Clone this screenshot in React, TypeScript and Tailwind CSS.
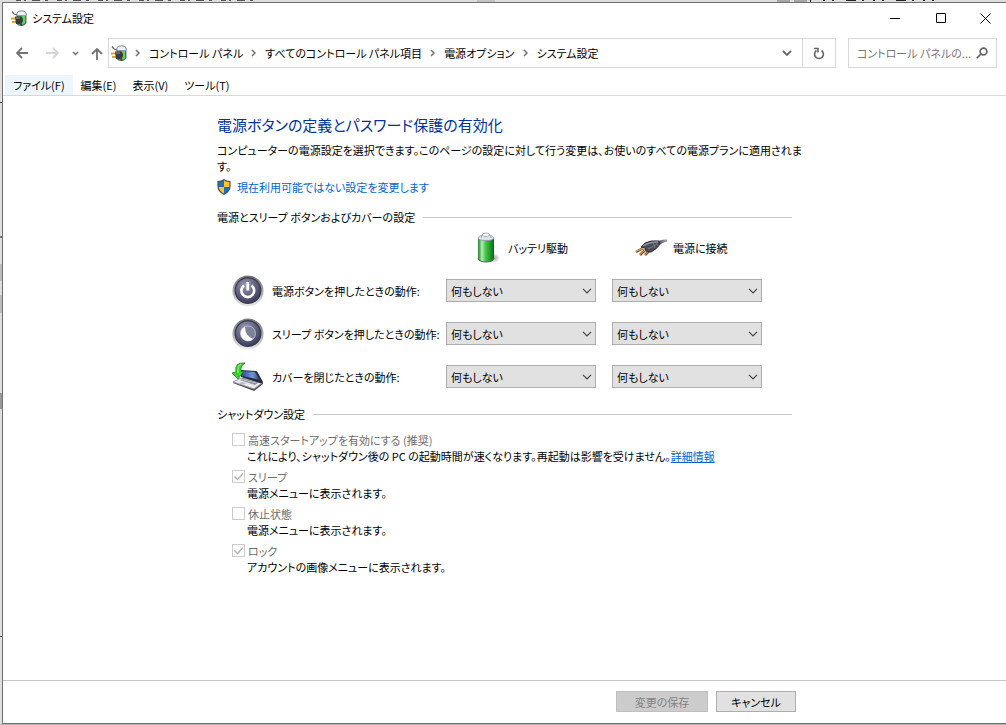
import { useState } from 'react';

const ACTIONS = ['何もしない', 'スリープ状態', '休止状態', 'シャットダウン'];

const BREADCRUMBS = ['コントロール パネル', 'すべてのコントロール パネル項目', '電源オプション', 'システム設定'];

const MENUS = ['ファイル(F)', '編集(E)', '表示(V)', 'ツール(T)'];

const SHUTDOWN_OPTIONS = [
  {
    id: 'fast-startup',
    label: '高速スタートアップを有効にする (推奨)',
    description: 'これにより、シャットダウン後の PC の起動時間が速くなります。再起動は影響を受けません。',
    link: '詳細情報',
    checked: false,
  },
  { id: 'sleep', label: 'スリープ', description: '電源メニューに表示されます。', checked: true },
  { id: 'hibernate', label: '休止状態', description: '電源メニューに表示されます。', checked: false },
  { id: 'lock', label: 'ロック', description: 'アカウントの画像メニューに表示されます。', checked: true },
];

function PowerOptionsIcon() {
  return (
    <svg width="16" height="17" viewBox="0 0 16 17" className="shrink-0">
      <path d="M6 3 Q6 1 10.5 1 Q15 1 15 3 V13 Q14 15.500 10.500 15.500 Q6 15.500 6 13Z" fill="#2f9e3c" stroke="#4a6b50" strokeWidth=".8" />
      <path d="M11 5h3v8l-3 2z" fill="#63cf68" />
      <path d="M6 3.500Q6 1 10.500 1T15 3.500V5.500H6z" fill="#eef1f6" stroke="#8a93a3" strokeWidth=".8" />
      <path d="M1 1.500 3 4l3 1" fill="none" stroke="#666" strokeWidth="1.300" />
      <path d="M0 8.500h5M1 12h5" stroke="#d9a92b" strokeWidth="1.800" />
      <path d="M4 6.500h4.500q3.500 0 3.500 3.500t-3.500 4H5z" fill="#3a3a3a" />
      <path d="M5 8h4" stroke="#999" />
      <path d="M9 13q1.500 1 2 3" fill="none" stroke="#444" strokeWidth="1.800" />
    </svg>
  );
}

function ShieldIcon() {
  return (
    <svg width="14" height="16" viewBox="0 0 14 16" className="shrink-0">
      <path d="M7 .7Q4.500 2.500 1 2.500V7q0 5.500 6 8.300Q13 12.500 13 7V2.500Q9.500 2.500 7 .7Z" fill="#1b6fc4" />
      <path d="M7 .7Q9.500 2.500 13 2.500V8H7ZM1 8h6v7.300Q1.600 13 1 8Z" fill="#ffc32b" />
      <path d="M7 .7Q4.500 2.500 1 2.500V7q0 5.500 6 8.300Q13 12.500 13 7V2.500Q9.500 2.500 7 .7Z" fill="none" stroke="#45525c" strokeWidth="1.200" />
    </svg>
  );
}

function BatteryIcon() {
  return (
    <svg width="24" height="32" viewBox="0 0 24 32" className="shrink-0">
      <defs>
        <linearGradient id="battery-body">
          <stop offset="0" stopColor="#1c8327" />
          <stop offset=".25" stopColor="#b4edb0" />
          <stop offset=".45" stopColor="#4fc653" />
          <stop offset=".7" stopColor="#25a52e" />
          <stop offset="1" stopColor="#0b6517" />
        </linearGradient>
        <radialGradient id="battery-shadow">
          <stop offset="0" stopColor="#888" stopOpacity=".8" />
          <stop offset="1" stopColor="#888" stopOpacity="0" />
        </radialGradient>
      </defs>
      <ellipse cx="18" cy="26" rx="6" ry="5" fill="url(#battery-shadow)" />
      <path d="M2 6v21q1 3 8 3t8-3V6z" fill="url(#battery-body)" />
      <path d="M2 26q1 4 8 4t8-4" fill="none" stroke="#4b6b4e" />
      <path d="M2 6Q3 4 6 3q1-2 4-2t4 2q3 1 4 3-1 2.500-8 2.500T2 6Z" fill="#dfe5ee" stroke="#8b98a4" strokeWidth=".8" />
      <path d="M6 3.500q4 2.500 8 0M6 3l-1 3M14 3l1 3" fill="none" stroke="#9aa5b8" strokeWidth=".8" />
      <ellipse cx="10" cy="2.800" rx="3" ry="1" fill="#fff" />
    </svg>
  );
}

function PlugIcon() {
  return (
    <svg width="32" height="20" viewBox="0 0 32 20" className="shrink-0">
      <defs>
        <linearGradient id="plug-cord">
          <stop offset="0" stopColor="#2c2d38" />
          <stop offset="1" stopColor="#a9abba" />
        </linearGradient>
      </defs>
      <path d="M20 5Q25 1 32 1.500V4q-5 0-9 5z" fill="url(#plug-cord)" />
      <path d="M8 10 1 14M10 12 5 17M14 13l-4 4" stroke="#754419" strokeWidth="2.500" />
      <path d="M8 10 1 13.500M10 12 5 16.500M14 13l-4 3.500" stroke="#ebbb83" />
      <path d="M6 9 10 5Q16 2 24 3l1 3q-3 5-9 8-4 0-5-1l-1-3z" fill="#4b4d59" stroke="#292a34" />
      <path d="M8 8q6-4 15-4" fill="none" stroke="#9194a3" strokeWidth="1.500" />
      <path d="m13 11 8-4M18 4l2 6M21 3l2 5" stroke="#747786" />
    </svg>
  );
}

function RoundButtonIcon({ kind }: { kind: 'power' | 'sleep' }) {
  return (
    <svg width="32" height="32" viewBox="0 0 32 32" className="shrink-0">
      <defs>
        <linearGradient id={`ring-${kind}`} x1="0" y1="0" x2="0" y2="1">
          <stop offset="0" stopColor="#777" />
          <stop offset=".6" stopColor="#b0b0b0" />
          <stop offset="1" stopColor="#ececec" />
        </linearGradient>
        <radialGradient id={`face-${kind}`} cx=".4" cy=".3" r=".8">
          <stop offset="0" stopColor="#9b9db5" />
          <stop offset=".5" stopColor="#61627f" />
          <stop offset="1" stopColor="#30304b" />
        </radialGradient>
      </defs>
      <circle cx="16" cy="16" r="15.500" fill={`url(#ring-${kind})`} />
      <circle cx="16" cy="15.500" r="12.800" fill={`url(#face-${kind})`} stroke="#37374f" strokeWidth="1.200" />
      {kind === 'power' ? (
        <>
          <path d="M12 10.500a6.400 6.400 0 1 0 7.500 0" fill="none" stroke="#fff" strokeWidth="2.600" />
          <path d="M15.800 7v8.500" stroke="#fff" strokeWidth="2.800" />
        </>
      ) : (
        <>
          <circle cx="16" cy="15.500" r="7.500" fill="#7f8099" stroke="#c7c8d6" strokeWidth=".8" />
          <path d="M13 8.500a7.500 7.500 0 1 0 8 12.500Q13 18 13 8.500Z" fill="#fff" />
        </>
      )}
    </svg>
  );
}

function LidIcon() {
  return (
    <svg width="32" height="30" viewBox="0 0 32 30" className="shrink-0">
      <defs>
        <linearGradient id="lid-screen">
          <stop offset="0" stopColor="#2e4da5" />
          <stop offset=".6" stopColor="#7295d6" />
          <stop offset="1" stopColor="#243363" />
        </linearGradient>
      </defs>
      <path d="m1 21 21 8 9-7v-2l-10 4-19-5z" fill="#4b4c55" />
      <path d="m1 20 8-4 21 5-8 6z" fill="#e6e8ec" stroke="#888c94" strokeWidth=".8" />
      <path d="m8 18 3-2 16 4-4 3z" fill="#8b8e98" />
      <path d="m9 17 15 4M12 19l4-2M16 20l4-2M20 21l4-2" stroke="#d0d3da" strokeWidth=".6" />
      <path d="m9 20 5 1-2 1.500-5-1z" fill="#b9bcc4" />
      <path d="m9 8 15 1q1 0 2 2l5 9q-1 2-3 1L9 15z" fill="#252a3a" />
      <path d="m11 9 12 1 5 8-18-4z" fill="url(#lid-screen)" />
      <path d="M13 1Q2 0 4 10L0 11l6 6 6-8-3 .5Q8 4 13 1Z" fill="#3bd12e" stroke="#168414" strokeWidth=".8" />
      <path d="M9 2Q5 4 6 11" fill="none" stroke="#aaf39c" />
    </svg>
  );
}

const POWER_ACTIONS = [
  { id: 'power', label: '電源ボタンを押したときの動作:', icon: <RoundButtonIcon kind="power" /> },
  { id: 'sleep', label: 'スリープ ボタンを押したときの動作:', icon: <RoundButtonIcon kind="sleep" /> },
  { id: 'lid', label: 'カバーを閉じたときの動作:', icon: <LidIcon /> },
];

function ActionSelect({ label }: { label: string }) {
  const [value, setValue] = useState(ACTIONS[0]);

  return (
    <div className="relative">
      <select
        aria-label={label}
        value={value}
        onChange={(e) => setValue(e.target.value)}
        className="block h-[23px] w-full appearance-none border border-[#adadad] bg-[#e1e1e1] pr-5 pl-1 text-[11px] leading-4"
      >
        {ACTIONS.map((action) => (
          <option key={action}>{action}</option>
        ))}
      </select>
      <svg
        width="10"
        height="6"
        fill="none"
        stroke="#444"
        className="pointer-events-none absolute top-[9px] right-1"
      >
        <path d="m1 .8 4 4 4-4" strokeWidth="1.200" />
      </svg>
    </div>
  );
}

function SectionTitle({ children }: { children: string }) {
  return (
    <div className="flex items-center gap-2">
      <h2>{children}</h2>
      <div className="h-px flex-1 bg-[#c8c8c8]" />
    </div>
  );
}

function TitleBar() {
  return (
    <div className="flex h-[30px] items-center pl-2">
      <PowerOptionsIcon />
      <span className="ml-[5px] flex-1">システム設定</span>
      <button aria-label="最小化" className="flex h-full w-[46px] items-center justify-center">
        <svg width="10" height="10" stroke="#000"><path d="M0 5.500h10" /></svg>
      </button>
      <button aria-label="最大化" className="flex h-full w-[46px] items-center justify-center">
        <svg width="10" height="10" fill="none" stroke="#000"><path d="M.5.5h9v9h-9z" /></svg>
      </button>
      <button aria-label="閉じる" className="flex h-full w-[42px] items-center justify-center">
        <svg width="11" height="11" stroke="#000"><path d="m.5.5 10 10M10.500.5l-10 10" /></svg>
      </button>
    </div>
  );
}

function AddressBar() {
  return (
    <div className="mt-[5px] flex h-[30px] items-center pr-[9px] pl-[13px]">
      <button aria-label="戻る" className="text-[#737373]">
        <svg width="14" height="12" fill="none" stroke="currentColor" strokeWidth="1.800"><path d="M12 6H1M6 1 1 6l5 5" /></svg>
      </button>
      <button aria-label="進む" className="ml-4 text-[#d6d6d6]">
        <svg width="14" height="12" fill="none" stroke="currentColor" strokeWidth="1.800"><path d="M0 6h11M7 1l5 5-5 5" /></svg>
      </button>
      <button aria-label="最近表示した場所" className="ml-3 text-[#737373]">
        <svg width="7" height="5" fill="none" stroke="currentColor" strokeWidth="1.500"><path d="m1 1 2.500 2.500L6 1" /></svg>
      </button>
      <button aria-label="上へ" className="ml-3 text-[#737373]">
        <svg width="12" height="13" fill="none" stroke="currentColor" strokeWidth="1.800"><path d="M6 13V2M1 7l5-5 5 5" /></svg>
      </button>
      <nav className="ml-[5px] flex h-full flex-1 items-center border border-[#d9d9d9] pl-[2px]">
        <PowerOptionsIcon />
        {BREADCRUMBS.map((crumb) => (
          <span key={crumb} className="flex items-center">
            <svg width="6" height="8" className="mx-2" fill="none" stroke="#737373" strokeWidth="1.500"><path d="m1 1 3 3-3 3" /></svg>
            <a href="#" className="whitespace-nowrap">{crumb}</a>
          </span>
        ))}
        <button aria-label="以前の場所" className="mr-[6px] ml-auto p-1 text-[#666]">
          <svg width="10" height="6" fill="none" stroke="currentColor" strokeWidth="1.800"><path d="m1 1 4 4 4-4" /></svg>
        </button>
        <button aria-label="最新の情報に更新" className="flex h-full w-[33px] items-center justify-center border-l border-[#d9d9d9]">
          <svg width="12" height="13" viewBox="0 0 12 13" fill="none" stroke="#666" strokeWidth="1.600">
            <path d="M8.500 3.500A4.400 4.400 0 1 1 3.500 3.500" />
            <path d="M1 1.500h4v4" />
          </svg>
        </button>
      </nav>
      <div className="ml-3 flex h-full w-[149px] items-center border border-[#d9d9d9] pr-2 pl-2">
        <input
          aria-label="検索"
          placeholder="コントロール パネルの..."
          className="min-w-0 flex-1 text-[11px] outline-none placeholder:text-[#767676]"
        />
        <svg width="12" height="12" viewBox="0 0 12 12" fill="none" stroke="#666" strokeWidth="1.700" className="shrink-0">
          <circle cx="7.500" cy="4.500" r="3.400" />
          <path d="M5 7 .8 11.200" />
        </svg>
      </div>
    </div>
  );
}

// Slivers of the window behind, visible along the top and left edges
function BackdropTop() {
  return (
    <div className="flex h-[2px] bg-[#dedede]">
      <svg width="240" height="2" className="ml-4 shrink-0" stroke="#555">
        <path d="M0 .5h240" strokeDasharray="5 3 2 6 8 5 3 9" />
      </svg>
      <div className="ml-[221px] w-[18px] bg-[#c4c4c4]" />
      <div className="ml-[282px] w-[13px] bg-[#a8a8a8]" />
      <div className="ml-1 w-[13px] bg-[#a8a8a8]" />
      <div className="ml-[3px] w-px bg-black" />
      <svg width="120" height="2" className="ml-3 shrink-0" stroke="#222">
        <path d="M0 .5h120" strokeDasharray="2 7 2 12 10 6 2 9" />
      </svg>
    </div>
  );
}

function BackdropLeft() {
  return (
    <div className="flex w-[2px] flex-col bg-[#dedede]">
      <div className="mt-[100px] h-px bg-[#333]" />
      <div className="mt-[133px] h-[2px] bg-[#777]" />
      <div className="mt-[26px] h-[17px] bg-[#bdbdbd]" />
      <div className="mt-[14px] h-[18px] bg-[#bdbdbd]" />
      <div className="mt-20 h-4 bg-[#999]" />
      <div className="mt-[227px] h-px bg-[#444]" />
    </div>
  );
}

export default function App() {
  return (
    <div
      lang="ja"
      className="flex min-h-screen flex-col bg-[#b4b4b4] pb-px font-['Noto_Sans_CJK_JP',sans-serif] text-[11px] leading-4 text-black [font-feature-settings:'palt']"
    >
      <BackdropTop />
      <div className="flex flex-1">
        <BackdropLeft />
        <div className="flex min-w-0 flex-1 flex-col border-y border-l border-[#707070] bg-white">
          <TitleBar />
          <AddressBar />
          <div className="mt-[7px] flex h-[21px] border-b border-[#d9d9d9] pl-[2px]">
            {MENUS.map((menu, i) => (
              <button key={menu} className={i === 0 ? 'bg-[#eef6fd] px-2' : 'px-2'}>
                {menu}
              </button>
            ))}
          </div>

          <main className="mx-auto w-full max-w-[575px] flex-1 pt-[17px]">
            <h1 className="text-[15px] leading-6 text-[#003399]">電源ボタンの定義とパスワード保護の有効化</h1>
            <p className="-mr-3 mt-[5px]">
              コンピューターの電源設定を選択できます。このページの設定に対して行う変更は、お使いのすべての電源プランに適用されます。
            </p>
            <a href="#" className="mt-[5px] flex items-center gap-[6px] text-[#0066cc]">
              <ShieldIcon />
              現在利用可能ではない設定を変更します
            </a>

            <section className="mt-[14px]">
              <SectionTitle>電源とスリープ ボタンおよびカバーの設定</SectionTitle>
              <div className="mt-[6px] grid grid-cols-[213px_150px_150px] items-center gap-x-4">
                <div className="col-start-2 flex h-[34px] items-center gap-2 pl-[30px]">
                  <BatteryIcon />
                  バッテリ駆動
                </div>
                <div className="flex h-[34px] items-center gap-[6px] pl-[23px]">
                  <PlugIcon />
                  電源に接続
                </div>
              </div>
              <div className="mt-1">
                {POWER_ACTIONS.map((item) => (
                  <div key={item.id} className="grid h-[43px] grid-cols-[213px_150px_150px] items-center gap-x-4">
                    <div className="flex items-center gap-2 pl-[15px] whitespace-nowrap">
                      {item.icon}
                      <span>{item.label}</span>
                    </div>
                    <ActionSelect label={`${item.label} バッテリ駆動`} />
                    <ActionSelect label={`${item.label} 電源に接続`} />
                  </div>
                ))}
              </div>
            </section>

            <section className="mt-2">
              <SectionTitle>シャットダウン設定</SectionTitle>
              <div className="mt-[9px] space-y-[3px] pl-[15px]">
                {SHUTDOWN_OPTIONS.map((option) => (
                  <div key={option.id}>
                    <div className="flex h-[17px] items-center gap-[3px]">
                      <span className="relative flex">
                        <input
                          id={option.id}
                          type="checkbox"
                          disabled
                          defaultChecked={option.checked}
                          className="peer size-[13px] appearance-none border border-[#cccccc] bg-white"
                        />
                        <svg
                          width="13"
                          height="13"
                          fill="none"
                          stroke="#b5b5b5"
                          strokeWidth="1.500"
                          className="pointer-events-none absolute inset-0 hidden peer-checked:block"
                        >
                          <path d="m2.500 6.500 3 3 5.500-6" />
                        </svg>
                      </span>
                      <label htmlFor={option.id} className="text-[#6d6d6d]">{option.label}</label>
                    </div>
                    <p className="pl-[15px] leading-[17px]">
                      {option.description}
                      {option.link && <a href="#" className="text-[#0066cc] underline">{option.link}</a>}
                    </p>
                  </div>
                ))}
              </div>
            </section>
          </main>

          <footer className="border-t border-[#c8c8c8] pt-[10px] pb-[11px]">
            <div className="mx-auto flex max-w-[583px] justify-end gap-2">
              <button disabled className="h-[21px] w-[92px] border border-[#bfbfbf] bg-[#cccccc] text-[#838383]">
                変更の保存
              </button>
              <button className="h-[21px] w-20 border border-[#adadad] bg-[#e1e1e1]">キャンセル</button>
            </div>
          </footer>
        </div>
      </div>
    </div>
  );
}
